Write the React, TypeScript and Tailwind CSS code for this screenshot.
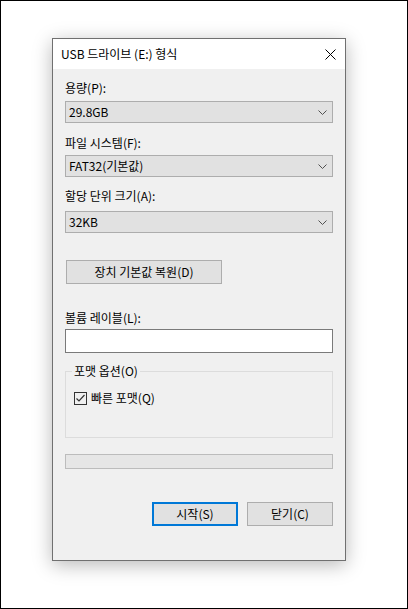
const font = { fontFamily: '"Noto Sans CJK KR", "Liberation Sans", sans-serif' };

const Chevron = () => (
  <svg width="9" height="5" viewBox="0 0 9 5" className="shrink-0">
    <path d="M0.5 0.5 L4.5 4.5 L8.5 0.5" fill="none" stroke="#505050" strokeWidth="1" />
  </svg>
);

const Select = ({ value }: { value: string }) => (
  <div className="flex h-[22px] w-full items-center justify-between border border-[#adadad] bg-[#e1e1e1] pl-[3px] pr-[5px] text-[12px] leading-4 text-black">
    <span>{value}</span>
    <Chevron />
  </div>
);

const Label = ({ text, className = "" }: { text: string; className?: string }) => (
  <div className={`h-4 text-[12px] leading-4 text-black ${className}`}>{text}</div>
);

export default function App() {
  return (
    <div
      className="h-[609px] w-[408px] border border-black bg-white pl-[51px] pt-[37px]"
      style={font}
    >
      <div className="flex h-[523px] w-[294px] flex-col border border-[#707070] bg-[#f0f0f0] shadow-[0_4px_18px_rgba(0,0,0,0.28)]">
        <div className="flex h-[30px] items-center justify-between bg-white pl-2 pr-[9px]">
          <span className="text-[12px] leading-4 text-black">USB 드라이브 (E:) 형식</span>
          <svg width="11" height="11" viewBox="0 0 11 11">
            <path d="M0.5 0.5 L10.5 10.5 M10.5 0.5 L0.5 10.5" stroke="#000" strokeWidth="1" />
          </svg>
        </div>

        <div className="flex flex-col px-3">
          <Label text="용량(P):" className="mt-[11px]" />
          <div className="mt-[5px]">
            <Select value="29.8GB" />
          </div>

          <Label text="파일 시스템(F):" className="mt-[12px]" />
          <div className="mt-[4px]">
            <Select value="FAT32(기본값)" />
          </div>

          <Label text="할당 단위 크기(A):" className="mt-[11px]" />
          <div className="mt-[7px]">
            <Select value="32KB" />
          </div>

          <button className="ml-px mt-[27px] h-6 w-[156px] border border-[#adadad] bg-[#e1e1e1] text-[12px] leading-4 text-black">
            장치 기본값 복원(D)
          </button>

          <Label text="볼륨 레이블(L):" className="mt-[26px]" />
          <div className="mt-[3px] h-6 w-full border border-[#7a7a7a] bg-white" />

          <fieldset className="mt-[10px] h-[75px] w-full border border-[#dcdcdc] px-2">
            <legend className="ml-[-2px] px-[2px] text-[12px] leading-4 text-black">포맷 옵션(O)</legend>
            <div className="mt-[11px] flex items-center gap-[4px]">
              <div className="flex h-[13px] w-[13px] items-center justify-center border border-[#333] bg-[#f0f0f0]">
                <svg width="11" height="11" viewBox="0 0 11 11">
                  <path d="M1.5 5.5 L4 8 L9.5 2" fill="none" stroke="#333" strokeWidth="1.2" />
                </svg>
              </div>
              <span className="text-[12px] leading-4 text-black">빠른 포맷(Q)</span>
            </div>
          </fieldset>

          <div className="mt-4 h-[15px] w-full border border-[#bcbcbc] bg-[#e6e6e6]" />

          <div className="mt-[33px] flex justify-end gap-[9px]">
            <button className="h-6 w-[86px] border-2 border-[#0078d7] bg-[#e1e1e1] text-[12px] leading-4 text-black">
              시작(S)
            </button>
            <button className="h-6 w-[86px] border border-[#adadad] bg-[#e1e1e1] text-[12px] leading-4 text-black">
              닫기(C)
            </button>
          </div>
        </div>
      </div>
    </div>
  );
}
